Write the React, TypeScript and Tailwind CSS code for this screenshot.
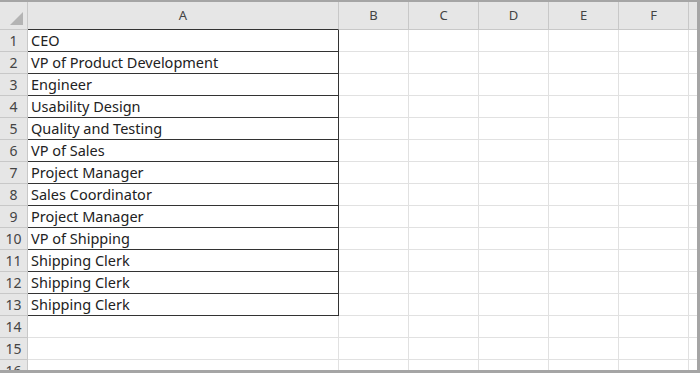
import React from 'react';

const titles = [
  'CEO',
  'VP of Product Development',
  'Engineer',
  'Usability Design',
  'Quality and Testing',
  'VP of Sales',
  'Project Manager',
  'Sales Coordinator',
  'Project Manager',
  'VP of Shipping',
  'Shipping Clerk',
  'Shipping Clerk',
  'Shipping Clerk',
];

const cols = ['B', 'C', 'D', 'E', 'F'];
const rowCount = 16;

export default function App() {
  const rows = Array.from({ length: rowCount }, (_, i) => i + 1);

  return (
    <div className="w-[700px] h-[373px] overflow-hidden bg-white border-t-2 border-r-[3px] border-b-[3px] border-[#a5a5a5] font-['Noto_Sans',sans-serif] text-[14.5px] text-[#222]">
      <div className="grid grid-cols-[28px_311px_70px_70px_70px_70px_70px_1fr] grid-rows-[28px] auto-rows-[22px]">
        {/* header row */}
        <div className="bg-[#e6e6e6] border-r border-b border-[#c8c8c8] flex items-end justify-end pr-[4px] pb-[4px]">
          <svg width="13" height="13" viewBox="0 0 13 13">
            <polygon points="13,0 13,13 0,13" fill="#b4b4b4" />
          </svg>
        </div>
        <div className="bg-[#e6e6e6] border-r border-b border-r-[#c8c8c8] border-b-[#333] flex items-center justify-center text-[#444] text-[13px]">
          A
        </div>
        {cols.map((c) => (
          <div
            key={c}
            className="bg-[#e6e6e6] border-r border-b border-[#c8c8c8] flex items-center justify-center text-[#444] text-[13px]"
          >
            {c}
          </div>
        ))}
        <div className="bg-[#e6e6e6] border-b border-[#c8c8c8]" />

        {rows.map((r) => {
          const filled = r <= titles.length;
          return (
            <React.Fragment key={r}>
              <div className="bg-[#e6e6e6] border-r border-b border-[#c8c8c8] flex items-center justify-center text-[#444] text-[14px]">
                {r}
              </div>
              <div
                className={
                  filled
                    ? 'border-r border-b border-[#333] flex items-center pl-[3px] pt-[1px] whitespace-nowrap'
                    : 'border-r border-b border-[#e1e1e1]'
                }
              >
                {filled ? titles[r - 1] : ''}
              </div>
              {cols.map((c) => (
                <div key={c} className="border-r border-b border-[#e1e1e1]" />
              ))}
              <div className="border-b border-[#e1e1e1]" />
            </React.Fragment>
          );
        })}
      </div>
    </div>
  );
}
